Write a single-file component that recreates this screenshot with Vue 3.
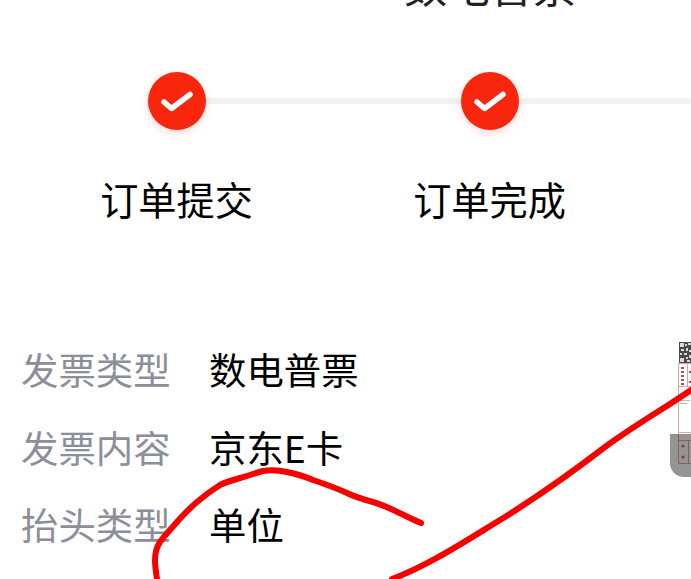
<script setup>
const steps = ['订单提交', '订单完成']
const rows = [
  { label: '发票类型', value: '数电普票' },
  { label: '发票内容', value: '京东E卡' },
  { label: '抬头类型', value: '单位' },
]
</script>

<template>
  <div class="page">
    <div class="title">数电普票</div>

    <div class="steps">
      <div v-for="step in steps" :key="step" class="step">
        <div class="track">
          <span class="dot">
            <svg width="34" height="26" viewBox="0 0 34 26">
              <path d="M4 14 L11.5 20.5 L30 6.5" fill="none" stroke="#fff" stroke-width="5.5" stroke-linecap="round" stroke-linejoin="round" />
            </svg>
          </span>
        </div>
        <div class="step-name">{{ step }}</div>
      </div>
    </div>

    <div class="info">
      <div v-for="row in rows" :key="row.label" class="row">
        <span class="label">{{ row.label }}</span>
        <span class="value">{{ row.value }}</span>
      </div>
    </div>

    <!-- invoice thumbnail, cut off by the right edge -->
    <div class="thumb">
      <svg width="21" height="143" viewBox="0 0 21 143">
        <rect x="9" y="7" width="12" height="21" fill="#4a4a4a" />
        <path d="M10 8h4v4h-4zM15 9h2v2h-2zM18 8h3v2h-3zM11 14h3v2h-3zM16 13h2v3h-2zM19 15h2v2h-2zM10 18h2v2h-2zM14 18h3v2h-3zM10 23h4v4h-4zM16 22h2v2h-2zM19 20h2v3h-2zM17 25h3v2h-3z" fill="#d8d8d8" />
        <path d="M8.5 28V128.5H21M8.5 28.5H21M8.5 51.5H21M8.5 97.5H21M8.5 105.5H21M17.5 28V51M18.5 105V128" fill="none" stroke="#e3a3a5" stroke-width="1" />
        <path d="M11 32h3v2h-3zM11 36h3v2h-3zM11 40h3v2h-3zM11 44h3v2h-3zM11 48h3v2h-3zM19 36h2v2h-2zM19 46h2v2h-2z" fill="#c0474b" />
        <path d="M10 65.5h10M10 68.5h7" stroke="#b8b8b8" stroke-width="1" />
      </svg>
      <div class="thumb-mask"></div>
      <svg class="thumb-marks" width="21" height="143" viewBox="0 0 21 143">
        <circle cx="13" cy="111" r="1.6" fill="#8a3a3c" />
        <circle cx="13" cy="122" r="1.6" fill="#8a3a3c" />
      </svg>
    </div>

    <!-- hand-drawn red mark over the screenshot -->
    <svg class="scribble" width="691" height="579" viewBox="0 0 691 579">
      <path d="M421 523 C404 516 390 507 373 502 C362 499 355 497 347 493 C336 488 325 484 313 480 C304 476 296 474 287 472 C278 470 270 470 263 471 C255 473 248 476 240 478 C233 480 226 482 220 485 C212 490 204 496 197 502 C190 508 183 515 177 522 C171 529 165 535 160 542 C156 548 155 554 155 560 C155 566 156 572 157 579" fill="none" stroke="#f60000" stroke-width="6" stroke-linecap="round" stroke-linejoin="round" />
      <path d="M691 390 C665 408 635 425 605 447 C575 470 540 495 505 517 C470 538 430 565 392 579" fill="none" stroke="#f60000" stroke-width="6" stroke-linecap="round" stroke-linejoin="round" />
    </svg>
  </div>
</template>

<style>
html,
body {
  margin: 0;
  background: #fff;
}
</style>

<style scoped>
.page {
  position: relative;
  width: 691px;
  height: 579px;
  overflow: hidden;
  background: #fff;
  font-family: "Noto Sans CJK SC", "Liberation Sans", sans-serif;
  color: #000;
}

.title {
  margin-top: -41px;
  padding-left: 404px;
  font-size: 43px;
  line-height: 50px;
  color: #222;
  white-space: nowrap;
}

.steps {
  display: flex;
  margin-top: 63px;
  padding-left: 20px;
}

.step {
  flex: 0 0 313px;
  display: flex;
  flex-direction: column;
  align-items: center;
}

.track {
  width: 100%;
  display: flex;
  justify-content: center;
  position: relative;
}

.track::after {
  content: "";
  position: absolute;
  left: 50%;
  top: 26px;
  width: 313px;
  height: 6px;
  background: #f2f2f2;
}

.dot {
  position: relative;
  z-index: 1;
  width: 58px;
  height: 58px;
  border-radius: 50%;
  background: #f8260c;
  box-shadow: 0 3px 8px rgba(250, 44, 14, 0.18);
  display: flex;
  align-items: center;
  justify-content: center;
}

.step-name {
  margin-top: 47px;
  font-size: 38.2px;
  line-height: 44px;
  white-space: nowrap;
}

.info {
  margin-top: 127px;
  padding-left: 21px;
  display: flex;
  flex-direction: column;
  gap: 34px;
}

.row {
  display: flex;
  font-size: 37.4px;
  line-height: 43.5px;
  white-space: nowrap;
}

.label {
  width: 188px;
  color: #8c8f99;
}

.thumb {
  position: absolute;
  left: 670px;
  top: 335px;
  width: 21px;
  height: 143px;
}

.thumb svg {
  display: block;
}

.thumb .thumb-marks {
  position: absolute;
  left: 0;
  top: 0;
}

.thumb-mask {
  position: absolute;
  left: 0;
  top: 99px;
  width: 21px;
  height: 43px;
  background: rgba(0, 0, 0, 0.42);
  border-bottom-left-radius: 14px;
}

.scribble {
  position: absolute;
  left: 0;
  top: 0;
  pointer-events: none;
}
</style>
